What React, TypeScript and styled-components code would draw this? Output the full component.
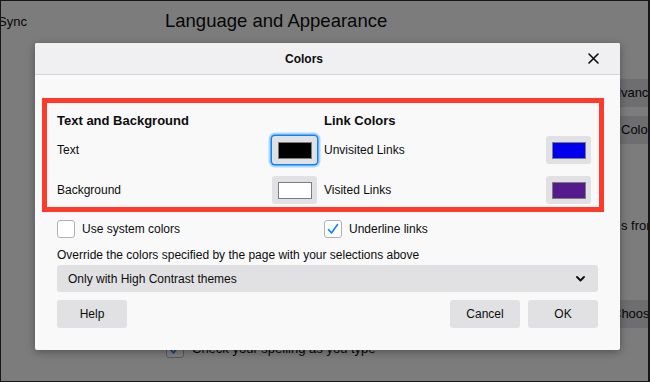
import React from "react";
import styled, { createGlobalStyle } from "styled-components";

const Global = createGlobalStyle`
  html, body { margin: 0; padding: 0; }
  body { font-family: "Liberation Sans", Arial, sans-serif; }
  * { box-sizing: border-box; }
`;

const Page = styled.div`
  position: relative;
  width: 650px;
  height: 382px;
  overflow: hidden;
  display: flex;
  background: #f9f9fa;
  border: 1px solid #161616;
  border-right-width: 2px;
  color: #0c0c0d;
  font-size: 13px;
`;

const Sidebar = styled.nav`
  width: 164px;
  flex: none;
  padding-top: 13px;
`;

const NavItem = styled.div`
  font-size: 13px;
  line-height: 16px;
  margin-left: -3px;
`;

const Main = styled.main`
  flex: 1;
  min-width: 0;
  display: flex;
  flex-direction: column;
`;

const PageHeading = styled.h1`
  margin: 8px 0 0 0;
  font-size: 18.5px;
  line-height: 24px;
  font-weight: 400;
  white-space: nowrap;
`;

const PageRow = styled.div<{ $top: number }>`
  display: flex;
  align-items: center;
  margin-top: ${(p) => p.$top}px;
  white-space: nowrap;
`;

const PageButton = styled.div<{ $left: number }>`
  height: 28px;
  line-height: 28px;
  padding: 0 11px;
  margin-left: ${(p) => p.$left}px;
  background: #dcdce0;
  border-radius: 3px;
  font-size: 13px;
  flex: none;
`;

const DescClip = styled.span`
  width: 456px;
  overflow: hidden;
  flex: none;
`;

const PageText = styled.span`
  font-size: 13px;
  line-height: 16px;
`;

const PageCheck = styled.span`
  width: 18px;
  height: 18px;
  margin-left: 1px;
  margin-right: 8px;
  border: 1px solid #b1b1b3;
  border-radius: 3px;
  background: #fff;
  display: flex;
  align-items: center;
  justify-content: center;
  flex: none;
`;

const Backdrop = styled.div`
  position: absolute;
  inset: 0;
  background: rgba(0, 0, 0, 0.5);
`;

const Dialog = styled.div`
  position: absolute;
  left: 34px;
  top: 42px;
  width: 585px;
  background: #f9f9fa;
  border-radius: 2px;
  box-shadow: 0 2px 8px rgba(0, 0, 0, 0.35);
  overflow: hidden;
`;

const DialogHeader = styled.div`
  height: 32px;
  display: flex;
  align-items: center;
  background: #f0f0f2;
  border-bottom: 1px solid #d7d7db;
`;

const DialogTitle = styled.div`
  flex: 1;
  text-align: center;
  font-size: 12px;
  font-weight: 700;
`;

const CloseButton = styled.div`
  width: 40px;
  margin-right: 7px;
  height: 32px;
  display: flex;
  align-items: center;
  justify-content: center;
`;

const DialogBody = styled.div`
  padding: 23px 22px 22px 22px;
  display: flex;
  flex-direction: column;
  font-size: 12px;
`;

const Highlight = styled.section`
  margin: 0 -6px 0 -15px;
  border: 5px solid #ff3a2b;
  padding: 10px 8px 3px 10px;
`;

const TwoCols = styled.div`
  display: grid;
  grid-template-columns: 260px 267px;
  column-gap: 7px;
`;

const Column = styled.div`
  display: flex;
  flex-direction: column;
`;

const GroupTitle = styled.div`
  font-size: 13px;
  font-weight: 700;
  line-height: 16px;
  margin-bottom: 7px;
`;

const ColorRow = styled.div<{ $gap: number }>`
  display: flex;
  align-items: center;
  justify-content: space-between;
  height: 28px;
  margin-top: ${(p) => p.$gap}px;
`;

const Label = styled.span`
  font-size: 12px;
  line-height: 15px;
`;

const Swatch = styled.div<{ $focused?: boolean }>`
  width: 45px;
  height: 28px;
  border-radius: 3px;
  background: #e1e1e3;
  display: flex;
  align-items: center;
  justify-content: center;
  box-shadow: ${(p) =>
    p.$focused ? "0 0 0 1.5px #0a84ff, 0 0 0 3.5px rgba(10,132,255,0.3)" : "none"};
`;

const Chip = styled.span<{ $color: string }>`
  width: 34px;
  height: 17px;
  background: ${(p) => p.$color};
  border: 1px solid #7c7c80;
`;

const CheckRow = styled.div`
  display: grid;
  grid-template-columns: 260px 267px;
  column-gap: 7px;
  margin-top: 8px;
`;

const CheckItem = styled.label`
  display: flex;
  align-items: center;
  height: 18px;
  font-size: 12px;
`;

const Box = styled.span`
  width: 18px;
  height: 18px;
  border: 1px solid #b1b1b3;
  border-radius: 3px;
  background: #fff;
  margin-right: 7px;
  display: flex;
  align-items: center;
  justify-content: center;
  flex: none;
`;

const Hint = styled.div`
  margin-top: 10px;
  font-size: 12px;
  line-height: 15px;
`;

const Select = styled.div`
  margin-top: 2px;
  height: 27px;
  border-radius: 3px;
  background: #e1e1e3;
  display: flex;
  align-items: center;
  justify-content: space-between;
  padding: 0 13px 0 11px;
  font-size: 12px;
`;

const Footer = styled.div`
  margin-top: 8px;
  display: flex;
  gap: 8px;
`;

const Button = styled.div<{ $push?: boolean }>`
  width: 70px;
  height: 28px;
  border-radius: 3px;
  background: #e1e1e3;
  display: flex;
  align-items: center;
  justify-content: center;
  font-size: 12px;
  margin-left: ${(p) => (p.$push ? "auto" : "0")};
`;

const Check = () => (
  <svg width="14" height="14" viewBox="0 0 14 14">
    <polyline points="2.5,7.5 5.5,11 11.5,2.5" fill="none" stroke="#0a84ff" strokeWidth="1.6" strokeLinecap="round" strokeLinejoin="round" />
  </svg>
);

export default function App() {
  return (
    <>
      <Global />
      <Page>
        <Sidebar>
          <NavItem>Sync</NavItem>
        </Sidebar>
        <Main>
          <PageHeading>Language and Appearance</PageHeading>
          <PageRow $top={46}>
            <PageButton $left={429}>Advanced…</PageButton>
          </PageRow>
          <PageRow $top={9}>
            <PageButton $left={445}>Colors…</PageButton>
          </PageRow>
          <PageRow $top={74}>
            <PageText as={DescClip}>Choose the language used to display menus, messages, and notification</PageText>
            <PageText>s from Firefox.</PageText>
          </PageRow>
          <PageRow $top={66}>
            <PageButton $left={436}>Choose…</PageButton>
          </PageRow>
          <PageRow $top={12}>
            <PageCheck>
              <Check />
            </PageCheck>
            <PageText>Check your spelling as you type</PageText>
          </PageRow>
        </Main>
        <Backdrop />
        <Dialog>
          <DialogHeader>
            <DialogTitle>Colors</DialogTitle>
            <CloseButton>
              <svg width="11" height="11" viewBox="0 0 11 11">
                <path d="M1 1L10 10M10 1L1 10" stroke="#0c0c0d" strokeWidth="1.6" strokeLinecap="round" />
              </svg>
            </CloseButton>
          </DialogHeader>
          <DialogBody>
            <Highlight>
              <TwoCols>
                <Column>
                  <GroupTitle>Text and Background</GroupTitle>
                  <ColorRow $gap={0}>
                    <Label>Text</Label>
                    <Swatch $focused>
                      <Chip $color="#000000" />
                    </Swatch>
                  </ColorRow>
                  <ColorRow $gap={12}>
                    <Label>Background</Label>
                    <Swatch>
                      <Chip $color="#ffffff" />
                    </Swatch>
                  </ColorRow>
                </Column>
                <Column>
                  <GroupTitle>Link Colors</GroupTitle>
                  <ColorRow $gap={0}>
                    <Label>Unvisited Links</Label>
                    <Swatch>
                      <Chip $color="#0000ee" />
                    </Swatch>
                  </ColorRow>
                  <ColorRow $gap={12}>
                    <Label>Visited Links</Label>
                    <Swatch>
                      <Chip $color="#551a8b" />
                    </Swatch>
                  </ColorRow>
                </Column>
              </TwoCols>
            </Highlight>
            <CheckRow>
              <CheckItem>
                <Box />
                Use system colors
              </CheckItem>
              <CheckItem>
                <Box>
                  <Check />
                </Box>
                Underline links
              </CheckItem>
            </CheckRow>
            <Hint>Override the colors specified by the page with your selections above</Hint>
            <Select>
              <span>Only with High Contrast themes</span>
              <svg width="9" height="6" viewBox="0 0 9 6">
                <polyline points="1,1 4.5,4.5 8,1" fill="none" stroke="#0c0c0d" strokeWidth="1.8" strokeLinecap="round" strokeLinejoin="round" />
              </svg>
            </Select>
            <Footer>
              <Button>Help</Button>
              <Button $push>Cancel</Button>
              <Button>OK</Button>
            </Footer>
          </DialogBody>
        </Dialog>
      </Page>
    </>
  );
}
